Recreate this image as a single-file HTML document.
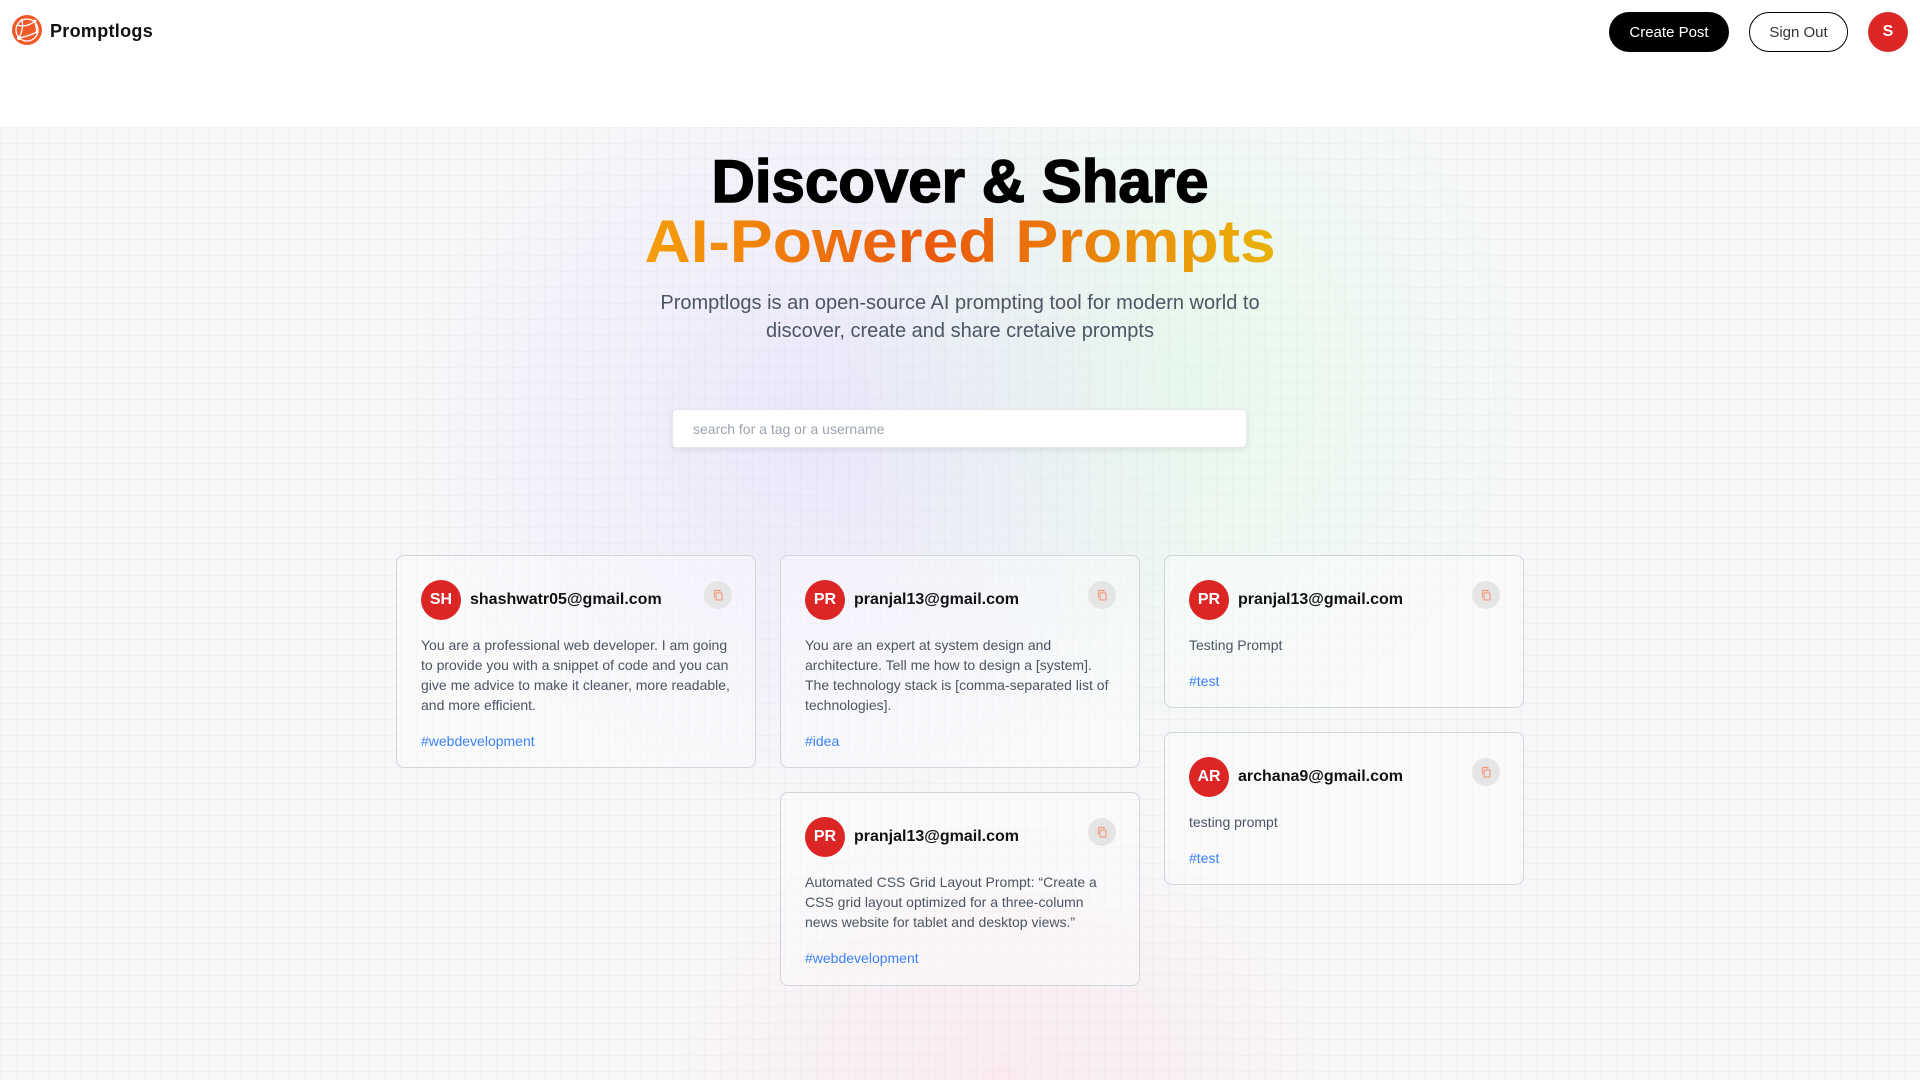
<!DOCTYPE html>
<html><head><meta charset="utf-8"><style>
*{box-sizing:border-box;margin:0;padding:0}
body{width:1920px;height:1080px;overflow:hidden;font-family:"Liberation Sans",Arial,sans-serif;background:#fff;position:relative}
.hdr{position:absolute;left:0;top:0;width:1920px;height:127px;background:#fff}
.main{position:absolute;left:0;top:127px;width:1920px;height:953px;background:#f7f7f9;
background-image:radial-gradient(ellipse 420px 380px at 820px 300px,rgba(210,200,255,.35),transparent),radial-gradient(ellipse 380px 380px at 1180px 250px,rgba(200,255,210,.35),transparent),radial-gradient(ellipse 360px 260px at 1000px 950px,rgba(255,210,220,.35),transparent),linear-gradient(rgba(0,0,0,.025) 1px,transparent 1px),linear-gradient(90deg,rgba(0,0,0,.025) 1px,transparent 1px);background-size:auto,auto,auto,16px 16px,16px 16px}
.logo{position:absolute;left:12px;top:15px;width:30px;height:30px}
.brand{position:absolute;left:50px;top:21px;font-size:18px;font-weight:700;color:#111;letter-spacing:.3px}
.btn{position:absolute;top:12px;height:40px;border-radius:20px;font-size:15px;display:flex;align-items:center;justify-content:center}
.cp{left:1609px;width:120px;background:#000;color:#fff}
.so{left:1749px;width:99px;border:1px solid #000;color:#333;background:#fff}
.av{position:absolute;left:1868px;top:12px;width:40px;height:40px;border-radius:50%;background:#dc2626;color:#fff;font-weight:700;font-size:16px;display:flex;align-items:center;justify-content:center}
.t{position:absolute;left:0;width:1920px;text-align:center;font-weight:700;font-size:60px;line-height:60px}
.t span{display:inline-block;-webkit-text-stroke:1.5px currentColor}
.t1{top:152px;color:#000}
.t2 span{background:linear-gradient(90deg,#f59e0b,#ea580c 45%,#eab308);-webkit-background-clip:text;background-clip:text;color:transparent;-webkit-text-stroke:0;transform:scaleX(1.07)}
.t2{top:212px}
.sub{position:absolute;left:0;width:1920px;top:289px;text-align:center;font-size:20px;line-height:28px;color:#4b5563}
.search{position:absolute;left:672px;top:409px;width:575px;height:39px;background:#fff;border:1px solid #e5e7eb;border-radius:4px;box-shadow:0 2px 6px rgba(0,0,0,.08);font-size:14px;color:#9ca3af;padding:11px 20px}
.card{position:absolute;width:360px;border:1px solid #d1d5db;border-radius:8px;background:rgba(255,255,255,.35);padding:24px}
.card .a{position:absolute;left:24px;top:24px;width:40px;height:40px;border-radius:50%;background:#dc2626;color:#fff;font-weight:700;font-size:16px;display:flex;align-items:center;justify-content:center}
.card .e{position:absolute;left:73px;top:35px;font-size:16px;font-weight:700;color:#111}
.card .c{position:absolute;right:23px;top:25px;width:28px;height:28px;border-radius:50%;background:#e5e5e5;display:flex;align-items:center;justify-content:center}
.card .p{margin-top:55px;font-size:14px;line-height:20px;color:#4b5563}
.card .g{margin-top:16px;font-size:14px;line-height:20px;color:#3b82f6}
</style></head><body>
<div class="hdr"></div>
<div class="main"></div>
<svg class="logo" viewBox="0 0 30 30"><circle cx="15" cy="15" r="15" fill="#f05a28"/><g stroke="#fff" stroke-width="1.3" fill="none"><circle cx="15" cy="15" r="11"/><path d="M5 10 Q15 13 23 6 M7 23 Q12 14 10 5 M7 23 Q17 21 25 17 M23 6 L25 17"/></g><g fill="#fff"><circle cx="7" cy="23" r="2"/><circle cx="23" cy="6" r="1.5"/><circle cx="25" cy="17" r="1.5"/><circle cx="10" cy="5" r="1.3"/></g></svg>
<div class="brand">Promptlogs</div>
<div class="btn cp">Create Post</div>
<div class="btn so">Sign Out</div>
<div class="av">S</div>
<div class="t t1"><span>Discover &amp; Share</span></div>
<div class="t t2"><span>AI-Powered Prompts</span></div>
<div class="sub">Promptlogs is an open-source AI prompting tool for modern world to<br>discover, create and share cretaive prompts</div>
<div class="search">search for a tag or a username</div>

<div class="card" style="left:396px;top:555px;height:213px"><div class="a">SH</div><div class="e">shashwatr05@gmail.com</div><div class="c"><svg width="12" height="12" viewBox="0 0 12 12" fill="none" stroke="#f0a080" stroke-width="1.2"><rect x="4" y="4" width="6" height="7" rx="1"/><path d="M3 8H2.5V1.5H8V3"/></svg></div><div class="p">You are a professional web developer. I am going to provide you with a snippet of code and you can give me advice to make it cleaner, more readable, and more efficient.</div><div class="g">#webdevelopment</div></div>

<div class="card" style="left:780px;top:555px;height:213px"><div class="a">PR</div><div class="e">pranjal13@gmail.com</div><div class="c"><svg width="12" height="12" viewBox="0 0 12 12" fill="none" stroke="#f0a080" stroke-width="1.2"><rect x="4" y="4" width="6" height="7" rx="1"/><path d="M3 8H2.5V1.5H8V3"/></svg></div><div class="p">You are an expert at system design and architecture. Tell me how to design a [system]. The technology stack is [comma-separated list of technologies].</div><div class="g">#idea</div></div>

<div class="card" style="left:780px;top:792px;height:194px"><div class="a">PR</div><div class="e">pranjal13@gmail.com</div><div class="c"><svg width="12" height="12" viewBox="0 0 12 12" fill="none" stroke="#f0a080" stroke-width="1.2"><rect x="4" y="4" width="6" height="7" rx="1"/><path d="M3 8H2.5V1.5H8V3"/></svg></div><div class="p">Automated CSS Grid Layout Prompt: “Create a CSS grid layout optimized for a three-column news website for tablet and desktop views.”</div><div class="g">#webdevelopment</div></div>

<div class="card" style="left:1164px;top:555px;height:153px"><div class="a">PR</div><div class="e">pranjal13@gmail.com</div><div class="c"><svg width="12" height="12" viewBox="0 0 12 12" fill="none" stroke="#f0a080" stroke-width="1.2"><rect x="4" y="4" width="6" height="7" rx="1"/><path d="M3 8H2.5V1.5H8V3"/></svg></div><div class="p">Testing Prompt</div><div class="g">#test</div></div>

<div class="card" style="left:1164px;top:732px;height:153px"><div class="a">AR</div><div class="e">archana9@gmail.com</div><div class="c"><svg width="12" height="12" viewBox="0 0 12 12" fill="none" stroke="#f0a080" stroke-width="1.2"><rect x="4" y="4" width="6" height="7" rx="1"/><path d="M3 8H2.5V1.5H8V3"/></svg></div><div class="p">testing prompt</div><div class="g">#test</div></div>
</body></html>
